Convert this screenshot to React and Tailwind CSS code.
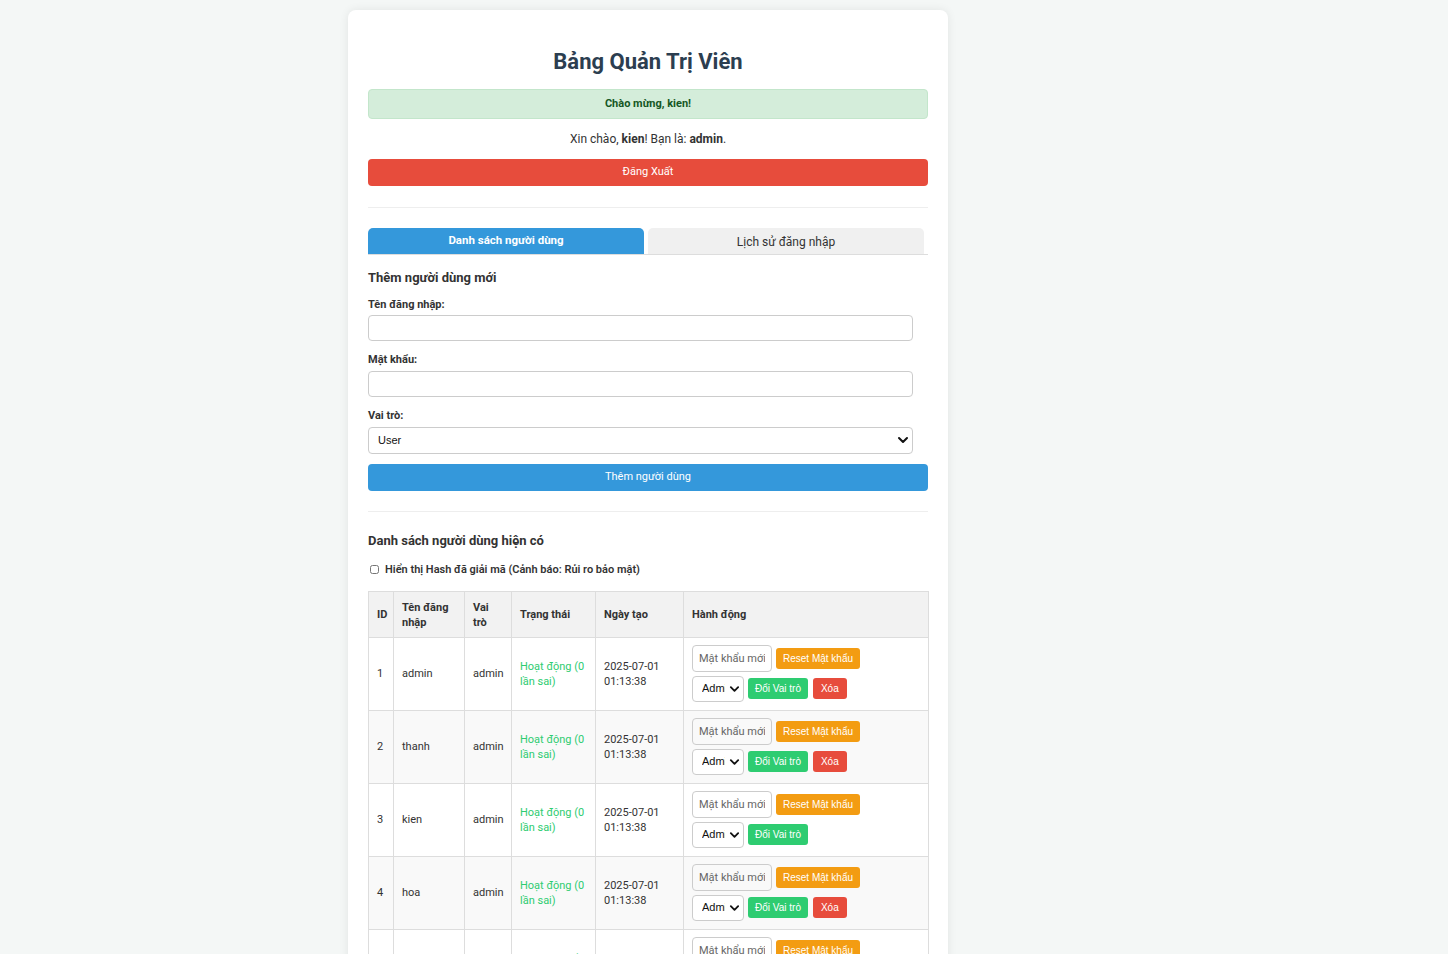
import React from 'react';

const users = [
  { id: 1, username: 'admin', role: 'admin', canDelete: true },
  { id: 2, username: 'thanh', role: 'admin', canDelete: true },
  { id: 3, username: 'kien', role: 'admin', canDelete: false },
  { id: 4, username: 'hoa', role: 'admin', canDelete: true },
  { id: 5, username: 'minh', role: 'user', canDelete: true },
  { id: 6, username: 'lan', role: 'user', canDelete: true },
];

const segoe = { fontFamily: '"Segoe UI", Roboto, "Noto Sans", sans-serif' };
const arial = { fontFamily: '"Liberation Sans", Arial, sans-serif' };

const Chevron = ({ className }) => (
  <svg className={className} viewBox="0 0 12 12" fill="none">
    <path d="M2 4l4 4 4-4" stroke="#111" strokeWidth="2" strokeLinecap="round" strokeLinejoin="round" />
  </svg>
);

const SelectBox = ({ value, className, textClass, chevronClass }) => (
  <div className={`relative ${className}`}>
    <select
      defaultValue={value}
      className={`appearance-none w-full h-full bg-white border border-[#ccc] rounded-[4px] outline-none text-[#111] ${textClass}`}
      style={arial}
    >
      <option>{value}</option>
    </select>
    <Chevron className={`absolute top-1/2 -translate-y-1/2 pointer-events-none ${chevronClass}`} />
  </div>
);

const ActionCell = ({ user }) => (
  <div className="flex flex-col gap-1">
    <div className="flex items-center gap-1">
      <input
        placeholder="Mật khẩu mới"
        className="w-[80px] h-[27px] px-[6px] border border-[#ccc] rounded-[4px] text-[11px] placeholder:text-[#666] outline-none"
        style={segoe}
      />
      <button className="h-[21px] px-[7px] bg-[#f39c12] text-white text-[10px] rounded-[3px]" style={arial}>
        Reset Mật khẩu
      </button>
    </div>
    <div className="flex items-center gap-1">
      <SelectBox
        value="Admin"
        className="w-[52px] h-[26px]"
        textClass="text-[11px] pl-[9px] pr-[18px]"
        chevronClass="right-[4px] w-[11px] h-[11px]"
      />
      <button className="h-[21px] px-[7px] bg-[#2ecc71] text-white text-[10px] rounded-[3px]" style={arial}>
        Đổi Vai trò
      </button>
      {user.canDelete && (
        <button className="h-[21px] px-[8px] bg-[#e74c3c] text-white text-[10px] rounded-[3px] ml-[1px]" style={arial}>
          Xóa
        </button>
      )}
    </div>
  </div>
);

const cols = ['w-[25px]', 'w-[71px]', 'w-[47px]', 'w-[84px]', 'w-[88px]', 'w-[245px]'];

export default function App() {
  return (
    <div className="min-h-screen bg-[#f4f7f6] pt-[10px] pb-10 text-[#333]" style={segoe}>
      <div className="w-[600px] ml-[348px] bg-white rounded-lg shadow-[0_0_10px_rgba(0,0,0,0.08)] px-5 pb-5 pt-5">
        {/* Header */}
        <h1 className="text-center text-[22px] font-bold leading-[29px] text-[#2c3e50] mt-[17px] mb-[13px]">
          Bảng Quản Trị Viên
        </h1>

        <div className="h-[30px] flex items-center justify-center bg-[#d4edda] border border-[#c3e6cb] rounded-[4px] text-[#155724] text-[11px] font-bold">
          Chào mừng, kien!
        </div>

        <p className="text-center text-[12px] leading-4 mt-3 mb-[11px]">
          Xin chào, <b>kien</b>! Bạn là: <b>admin</b>.
        </p>

        <button className="w-full h-[27px] bg-[#e74c3c] text-white text-[11px] rounded-[4px]">
          Đăng Xuất
        </button>

        <hr className="border-0 border-t border-[#eee] mt-[21px] mb-5" />

        {/* Tabs */}
        <div className="flex border-b border-[#ddd]">
          <button className="flex-1 mr-1 h-[26px] bg-[#3498db] text-white text-[11.5px] font-bold rounded-t-[5px]">
            Danh sách người dùng
          </button>
          <button className="flex-1 mr-1 h-[26px] bg-[#f0f0f0] text-[#333] text-[12px] rounded-t-[5px] pt-[2px]">
            Lịch sử đăng nhập
          </button>
        </div>

        {/* Add user form */}
        <h3 className="text-[13px] font-bold leading-[18px] mt-[14px] mb-[11px]">Thêm người dùng mới</h3>

        <div className="mb-3">
          <label className="block text-[11px] font-bold leading-[14px] mb-[3px]">Tên đăng nhập:</label>
          <input className="w-[545px] h-[26px] border border-[#ccc] rounded-[4px] px-2 outline-none" />
        </div>
        <div className="mb-3">
          <label className="block text-[11px] font-bold leading-[14px] mb-1">Mật khẩu:</label>
          <input type="password" className="w-[545px] h-[26px] border border-[#ccc] rounded-[4px] px-2 outline-none" />
        </div>
        <div className="mb-[9px]">
          <label className="block text-[11px] font-bold leading-[14px] mb-1">Vai trò:</label>
          <SelectBox
            value="User"
            className="w-[545px] h-[27px]"
            textClass="text-[11px] pl-[9px]"
            chevronClass="right-[4px] w-[12px] h-[12px]"
          />
        </div>

        <button className="w-full h-[27px] bg-[#3498db] text-white text-[11px] rounded-[4px]">
          Thêm người dùng
        </button>

        <hr className="border-0 border-t border-[#eee] my-5" />

        {/* User list */}
        <h3 className="text-[13px] font-bold leading-[18px] mt-[18px] mb-3">Danh sách người dùng hiện có</h3>

        <label className="flex items-center gap-[6px] text-[11px] font-semibold leading-4 mb-[13px] pl-[2px]">
          <input type="checkbox" className="w-[9px] h-[9px] m-0" />
          Hiển thị Hash đã giải mã (Cảnh báo: Rủi ro bảo mật)
        </label>

        <table className="w-full table-fixed border-collapse text-[11px]">
          <colgroup>
            {cols.map((c) => (
              <col key={c} className={c} />
            ))}
          </colgroup>
          <thead>
            <tr className="bg-[#f2f2f2]">
              {['ID', 'Tên đăng nhập', 'Vai trò', 'Trạng thái', 'Ngày tạo', 'Hành động'].map((h) => (
                <th
                  key={h}
                  className="border border-[#ddd] px-2 pt-[8px] pb-[7px] text-left font-bold leading-[15px]"
                >
                  {h}
                </th>
              ))}
            </tr>
          </thead>
          <tbody>
            {users.map((u, i) => (
              <tr key={u.id} className={i % 2 === 1 ? 'bg-[#f9f9f9]' : 'bg-white'}>
                <td className="border border-[#ddd] px-2 leading-[15px]">{u.id}</td>
                <td className="border border-[#ddd] px-2 leading-[15px]">{u.username}</td>
                <td className="border border-[#ddd] px-2 leading-[15px]">{u.role}</td>
                <td className="border border-[#ddd] px-2 leading-[15px] text-[#2ecc71]">Hoạt động (0 lần sai)</td>
                <td className="border border-[#ddd] px-2 leading-[15px]">2025-07-01 01:13:38</td>
                <td className="border border-[#ddd] px-2 pt-[7px] pb-[8px]">
                  <ActionCell user={u} />
                </td>
              </tr>
            ))}
          </tbody>
        </table>
      </div>
    </div>
  );
}
